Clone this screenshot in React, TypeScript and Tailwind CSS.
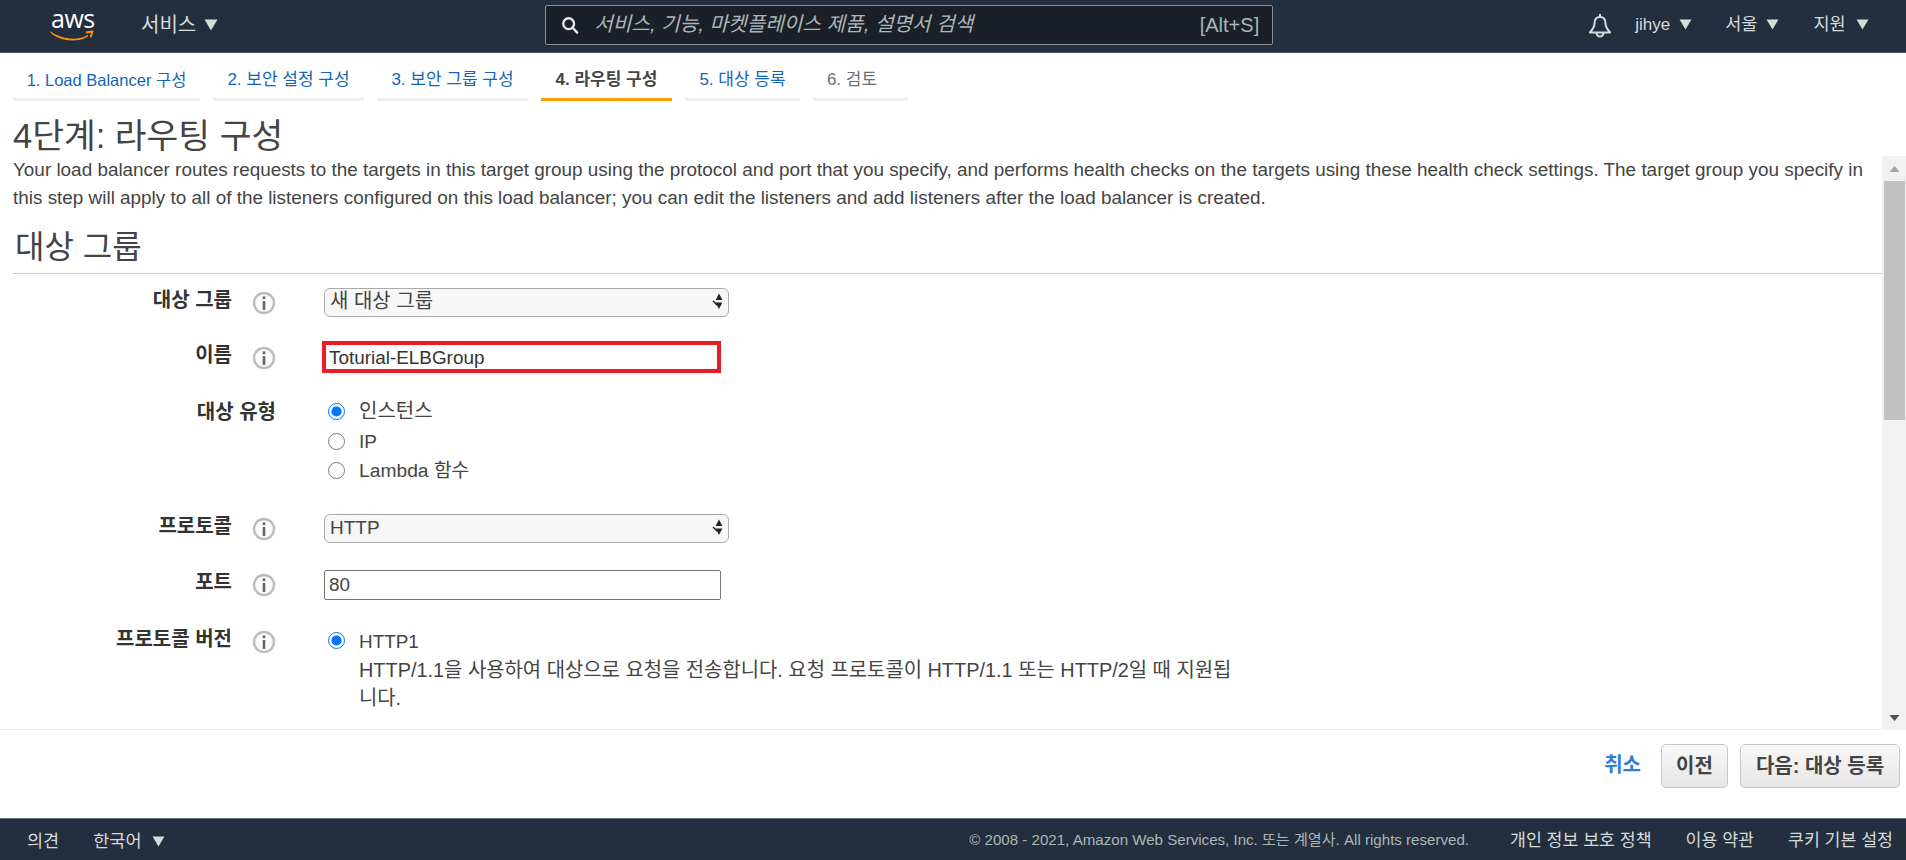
import React from "react";

const font = { fontFamily: '"Liberation Sans","Noto Sans CJK KR",sans-serif' };

function Caret({ className = "" }: { className?: string }) {
  return (
    <svg viewBox="0 0 14 12" className={className} fill="currentColor">
      <path d="M0.5 0.5h13L7 11.5z" />
    </svg>
  );
}

function Info() {
  return (
    <svg viewBox="0 0 24 24" className="w-[24px] h-[24px] shrink-0">
      <circle cx="12" cy="12" r="10" fill="#fbfbfb" stroke="#bdbdbd" strokeWidth="2.400" />
      <rect x="10.700" y="10" width="2.600" height="9" fill="#666" />
      <rect x="10.700" y="5.400" width="2.600" height="2.800" fill="#666" />
    </svg>
  );
}

function Row({ label, info = true, className = "", children }: { label: string; info?: boolean; className?: string; children: React.ReactNode }) {
  return (
    <div className={`flex ${className}`}>
      <div className={`text-right text-[20px] font-bold text-[#333] leading-[24px] ${info ? "w-[232px]" : "w-[276px]"}`}>{label}</div>
      <div className={info ? "w-[92px] pl-[20px] pt-[3px]" : "w-[48px]"}>{info && <Info />}</div>
      <div className="flex-1">{children}</div>
    </div>
  );
}

function SelectBox({ text, size }: { text: string; size: string }) {
  return (
    <div className={`w-[405px] h-[29px] rounded-[6px] border border-[#aaa] bg-[#f7f7f7] pl-[5px] pr-[4px] leading-[25px] text-[#444] flex justify-between ${size}`}>
      <span>{text}</span>
      <svg viewBox="0 0 12 16" className="mt-[4px] w-[12px] h-[17px]" fill="#222">
        <path d="M7 0l3.400 6.500H3.600z" />
        <path d="M7 15.500L3.600 9h6.800z" />
        <path d="M1 7.500l4.500 4.500" stroke="#222" strokeWidth="1.400" />
      </svg>
    </div>
  );
}

function Radio({ checked = false }: { checked?: boolean }) {
  return <input type="radio" checked={checked} readOnly className="w-[17px] h-[17px] m-0 accent-[#0075ff] shrink-0" />;
}

const tabs = [
  { t: "1. Load Balancer 구성", w: "w-[187px] text-[16.500px]", c: "text-[#1166bb]" },
  { t: "2. 보안 설정 구성", w: "w-[151px] text-[17px]", c: "text-[#1166bb]" },
  { t: "3. 보안 그룹 구성", w: "w-[151px] text-[17px]", c: "text-[#1166bb]" },
  { t: "4. 라우팅 구성", w: "w-[131px] text-[17px]", c: "text-[#444] font-bold", active: true },
  { t: "5. 대상 등록", w: "w-[115px] text-[17px]", c: "text-[#1166bb]" },
  { t: "6. 검토", w: "w-[95px] text-[17px] pr-[17px]", c: "text-[#687078]" },
];

export default function App() {
  return (
    <div style={font} className="h-[860px] w-[1906px] flex flex-col overflow-hidden bg-white text-[#444]">
      {/* top nav */}
      <header className="h-[53px] shrink-0 bg-[#232f3e] border-b border-[#4b5563] flex items-center pb-[3px] text-[#d5dbdb]">
        <div className="w-[141px] shrink-0 pl-[50px] flex flex-col -mt-[2px]">
          <span className="text-[25px] leading-[24px] pl-[1px] font-normal text-white tracking-[-0.5px]" style={{ fontFamily: '"Open Sans",sans-serif' }}>aws</span>
          <svg viewBox="0 0 44 12" className="w-[44px] h-[12px]" fill="none">
            <path d="M0.500 2C11 9.500 28 12 38 5.500C32 11.500 11 12.500 0.500 2z" fill="#f90" stroke="#f90" strokeWidth="1" strokeLinejoin="round" />
            <path d="M36 2.500l6.500-1-1.800 5.800" stroke="#f90" strokeWidth="1.800" strokeLinejoin="round" />
          </svg>
        </div>
        <span className="text-[20px] text-[#d5dbdb]">서비스</span>
        <Caret className="w-[14px] h-[12px] ml-[8px] text-[#d5dbdb]" />
        <div className="ml-[327px] w-[728px] h-[40px] rounded-[2px] border border-[#879196] bg-[#1b2028] flex items-center pl-[15px] pr-[13px]">
          <svg viewBox="0 0 20 20" className="w-[18px] h-[20px] shrink-0" fill="none" stroke="#e6e9ea" strokeWidth="2.600">
            <circle cx="8.500" cy="8.500" r="6" />
            <path d="M13 13l5 5.500" strokeLinecap="round" />
          </svg>
          <span className="ml-[15px] italic text-[20.200px] text-[#aab7b8] flex-1">서비스, 기능, 마켓플레이스 제품, 설명서 검색</span>
          <span className="text-[20px] text-[#aab7b8]">[Alt+S]</span>
        </div>
        <svg viewBox="0 0 22 24" className="ml-[316px] w-[22px] h-[24px] mt-[3px]" fill="none" stroke="#d5dbdb" strokeWidth="2">
          <path d="M11 0v3M11 3C7 3 5.500 6 5.500 9.500 5.500 13 3.500 15.500 1 18.500h20C18.500 15.500 16.500 13 16.500 9.500 16.500 6 15 3 11 3z" strokeLinejoin="round" />
          <path d="M7.500 18.500a3.500 4 0 0 0 7 0" />
        </svg>
        <span className="ml-[24px] text-[17px]">jihye</span>
        <Caret className="w-[13px] h-[11px] ml-[9px]" />
        <span className="ml-[33px] text-[17.500px]">서울</span>
        <Caret className="w-[13px] h-[11px] ml-[9px]" />
        <span className="ml-[34px] text-[17.500px]">지원</span>
        <Caret className="w-[13px] h-[11px] ml-[10px]" />
      </header>

      {/* tabs */}
      <nav className="h-[48px] shrink-0 flex items-end pl-[13px] gap-[13px]">
        {tabs.map((t) => (
          <div key={t.t} className={`${t.w} h-[39px] flex items-center justify-center border-b-[3px] ${t.active ? "border-[#ff9900]" : "border-[#eeeeee]"} ${t.c}`}>
            {t.t}
          </div>
        ))}
      </nav>

      <h1 className="h-[55px] shrink-0 pl-[13px] pt-[15px] text-[34.500px] leading-[40px] font-normal text-[#444]">4단계: 라우팅 구성</h1>

      {/* scroll region */}
      <div className="flex h-[574px] shrink-0">
        <div className="flex-1 min-w-0 flex flex-col border-b border-[#eeeeee]">
          <div className="pl-[13px] pr-[2px] text-[18.900px] leading-[27.500px] text-[#444]">
            Your load balancer routes requests to the targets in this target group using the protocol and port that you specify, and performs health checks on the targets using these health check settings. The target group you specify in this step will apply to all of the listeners configured on this load balancer; you can edit the listeners and add listeners after the load balancer is created.
          </div>
          <h2 className="ml-[15px] mt-[12px] mb-[2px] text-[32px] leading-[48px] font-normal text-[#444]">대상 그룹</h2>
          <div className="ml-[13px] border-t border-[#cccccc]" />
          <div className="pt-[14px]">
            <Row label="대상 그룹" className="h-[55px]">
              <SelectBox text="새 대상 그룹" size="text-[20px]" />
            </Row>
            <Row label="이름" className="h-[57px]">
              <div className="w-[399px] h-[32px] -mt-[2px] -ml-[2px] border-[4px] border-[#ed1c24] pl-[3px] text-[18.900px] leading-[25px] text-[#333]">Toturial-ELBGroup</div>
            </Row>
            <Row label="대상 유형" info={false} className="h-[114px]">
              <div className="flex flex-col -mt-[3px] text-[18.900px] text-[#444] leading-[29.500px] pl-[4px]">
                <label className="flex items-center gap-[14px]"><Radio checked /><span className="text-[20px]">인스턴스</span></label>
                <label className="flex items-center gap-[14px]"><Radio />IP</label>
                <label className="flex items-center gap-[14px]"><Radio /><span className="text-[19.250px]">Lambda 함수</span></label>
              </div>
            </Row>
            <Row label="프로토콜" className="h-[56px]">
              <SelectBox text="HTTP" size="text-[19px]" />
            </Row>
            <Row label="포트" className="h-[57px]">
              <div className="w-[397px] h-[30px] border border-[#777] rounded-[2px] pl-[4px] text-[18.900px] leading-[28px] text-[#444]">80</div>
            </Row>
            <Row label="프로토콜 버전" className="h-[90px]">
              <div className="flex gap-[14px] pl-[4px] w-[915px] text-[19.900px] leading-[28px] text-[#444]">
                <span className="pt-[5px] flex"><Radio checked /></span>
                <div>
                  <span className="text-[18.900px]">HTTP1</span>
                  <div>HTTP/1.1을 사용하여 대상으로 요청을 전송합니다. 요청 프로토콜이 HTTP/1.1 또는 HTTP/2일 때 지원됩니다.</div>
                </div>
              </div>
            </Row>
          </div>
        </div>
        {/* scrollbar */}
        <div className="w-[24px] shrink-0 bg-[#f1f1f1] flex flex-col">
          <div className="h-[25px] w-full flex items-center justify-center">
            <svg viewBox="0 0 10 6" className="w-[11px] h-[6px]" fill="#a3a3a3"><path d="M5 0l5 6H0z" /></svg>
          </div>
          <div className="self-end mr-[1px] w-[21px] h-[239px] bg-[#c1c1c1]" />
          <div className="flex-1" />
          <div className="h-[25px] w-full flex items-center justify-center">
            <svg viewBox="0 0 10 6" className="w-[11px] h-[6px]" fill="#505050"><path d="M0 0h10L5 6z" /></svg>
          </div>
        </div>
      </div>

      {/* action bar */}
      <div className="h-[88px] shrink-0 flex items-start justify-end pt-[14px] pr-[6px]">
        <a className="mt-[8px] mr-[20px] text-[#2b7fd8] text-[20px] font-bold leading-[26px]">취소</a>
        <button className="h-[44px] w-[67px] rounded-[5px] border border-[#c8c8c8] bg-gradient-to-b from-[#f8f8f8] to-[#e6e6e6] text-[20px] font-bold text-[#444]">이전</button>
        <button className="ml-[12px] h-[44px] w-[160px] rounded-[5px] border border-[#c8c8c8] bg-gradient-to-b from-[#f8f8f8] to-[#e6e6e6] text-[20px] font-bold text-[#444]">다음: 대상 등록</button>
      </div>

      {/* footer */}
      <footer className="h-[42px] shrink-0 bg-[#232f3e] border-t border-[#6b7280] flex items-center pl-[27px] pr-[13px] text-[17.300px] text-[#d5dbdb]">
        <span className="pt-[4px] text-[17.500px]">의견</span>
        <span className="pt-[4px] ml-[34px] text-[17.500px]">한국어</span>
        <Caret className="w-[13px] h-[11px] ml-[10px] mt-[4px]" />
        <span className="ml-auto pt-[2px] text-[15.100px] text-[#aab7b8]">© 2008 - 2021, Amazon Web Services, Inc. 또는 계열사. All rights reserved.</span>
        <span className="ml-[41px] pt-[2px]">개인 정보 보호 정책</span>
        <span className="ml-[34px] pt-[2px]">이용 약관</span>
        <span className="ml-[34px] pt-[2px]">쿠키 기본 설정</span>
      </footer>
    </div>
  );
}
